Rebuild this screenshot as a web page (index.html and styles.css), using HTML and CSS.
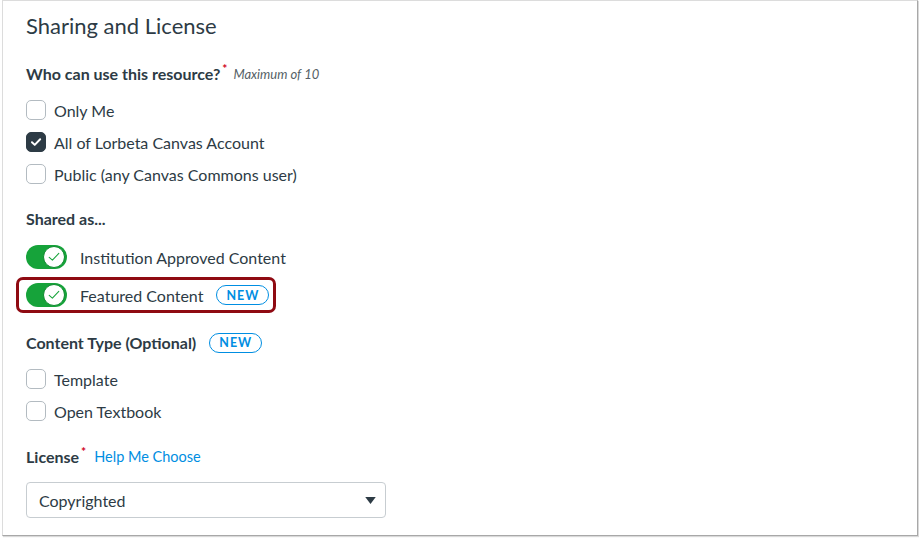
FILE: index.html
```html
<!DOCTYPE html>
<html lang="en">
<head>
<meta charset="utf-8">
<title>Sharing and License</title>
<link rel="stylesheet" href="styles.css">
</head>
<body>
<div class="frame">
  <h2 class="title">Sharing and License</h2>

  <div class="label label-who">Who can use this resource?<span class="req">*</span> <span class="hint">Maximum of 10</span></div>
  <div class="checks checks-who">
    <label class="check"><span class="box"></span>Only Me</label>
    <label class="check"><span class="box checked"><svg viewBox="0 0 20 20" width="20" height="20"><path d="M5.5 10.2 L8.6 13.2 L14.6 7" fill="none" stroke="#fff" stroke-width="2.2" stroke-linecap="round" stroke-linejoin="round"/></svg></span>All of Lorbeta Canvas Account</label>
    <label class="check"><span class="box"></span>Public (any Canvas Commons user)</label>
  </div>

  <div class="label label-shared">Shared as...</div>
  <div class="toggles">
    <div class="toggle-row"><span class="toggle"><span class="knob"><svg viewBox="0 0 20 20" width="16" height="16"><path d="M4 10.5 L8 14 L16 5.5" fill="none" stroke="#16a33a" stroke-width="1.3" stroke-linecap="round" stroke-linejoin="round"/></svg></span></span>Institution Approved Content</div>
    <div class="highlight">
      <div class="toggle-row"><span class="toggle"><span class="knob"><svg viewBox="0 0 20 20" width="16" height="16"><path d="M4 10.5 L8 14 L16 5.5" fill="none" stroke="#16a33a" stroke-width="1.3" stroke-linecap="round" stroke-linejoin="round"/></svg></span></span>Featured Content<span class="badge badge-featured">NEW</span></div>
    </div>
  </div>

  <div class="label label-type">Content Type (Optional)<span class="badge badge-type">NEW</span></div>
  <div class="checks checks-type">
    <label class="check"><span class="box"></span>Template</label>
    <label class="check"><span class="box"></span>Open Textbook</label>
  </div>

  <div class="label label-license">License<span class="req">*</span><a class="link" href="#">Help Me Choose</a></div>
  <div class="select">
    <span>Copyrighted</span>
    <svg class="arrow" viewBox="0 0 12 8" width="11" height="7"><path d="M0 0 H12 L6 8 Z" fill="#2d3b45"/></svg>
  </div>
</div>
</body>
</html>
```

FILE: styles.css
```css
* { box-sizing: border-box; }
html, body { margin: 0; padding: 0; background: #fff; }
body {
  font-family: Lato, "Open Sans", sans-serif;
  color: #2d3b45;
  width: 919px;
  height: 538px;
  overflow: hidden;
}
.frame {
  margin-left: 2px;
  width: 916px;
  height: 536px;
  border: 1px solid #dcdcdc;
  border-right: 1px solid #a8a8a8;
  border-bottom: 1px solid #a8a8a8;
  box-shadow: 1px 1px 1px rgba(0,0,0,0.15);
  padding: 11px 0 0 23px;
}
.title {
  margin: 0;
  font-size: 22px;
  font-weight: 400;
  line-height: 28px;
  height: 28px;
}
.label {
  font-weight: 700;
  font-size: 16px;
  line-height: 24px;
  height: 24px;
  display: flex;
  align-items: center;
}
.label-who { margin-top: 22px; }
.label-shared { margin-top: 17px; }
.label-type { margin-top: 18px; }
.label-license { margin-top: 18px; }
.req {
  color: #d0021b;
  font-size: 12px;
  align-self: flex-start;
  line-height: 14px;
  margin-left: 2px;
}
.hint {
  font-style: italic;
  font-weight: 400;
  font-size: 13px;
  color: #555f66;
  margin-left: 6px;
}
.checks-who { margin-top: 8px; }
.checks-type { margin-top: 8px; }
.check {
  display: flex;
  align-items: center;
  height: 32px;
  font-size: 16px;
}
.box {
  width: 20px;
  height: 20px;
  border: 1px solid #b3bbc1;
  border-radius: 5px;
  margin-right: 8px;
  background: #fff;
  display: flex;
  align-items: center;
  justify-content: center;
}
.box.checked {
  background: #2d3b45;
  border-color: #2d3b45;
}
.toggles { margin-top: 7px; }
.toggle-row {
  display: flex;
  align-items: center;
  height: 38px;
  font-size: 16px;
}
.toggle {
  width: 41px;
  height: 24px;
  border-radius: 12px;
  background: #16a33a;
  position: relative;
  margin-right: 13px;
  display: flex;
  align-items: center;
  justify-content: flex-end;
  padding-right: 2px;
}
.knob {
  width: 22px;
  height: 22px;
  border-radius: 50%;
  background: #fff;
  border: 1px solid #0e8a2e;
  display: flex;
  align-items: center;
  justify-content: center;
}
.highlight {
  margin-left: -10px;
  margin-top: 1px;
  width: 260px;
  height: 36px;
  border: 3px solid #8f0a12;
  border-radius: 7px;
  padding-left: 7px;
  display: flex;
  align-items: center;
}
.highlight .toggle-row { height: 30px; }
.badge {
  display: inline-flex;
  align-items: center;
  justify-content: center;
  height: 20px;
  padding: 0 9px;
  border: 1px solid #008ee2;
  border-radius: 10px;
  color: #008ee2;
  font-size: 12.5px;
  font-weight: 700;
  letter-spacing: 1px;
}
.badge-featured { margin-left: 13px; }
.badge-type { margin-left: 13px; }
.link {
  color: #008ee2;
  text-decoration: none;
  font-weight: 400;
  font-size: 14.5px;
  margin-left: 8px;
}
.select {
  margin-top: 13px;
  width: 360px;
  height: 36px;
  border: 1px solid #c7cdd1;
  border-radius: 4px;
  display: flex;
  align-items: center;
  justify-content: space-between;
  padding: 0 9px 0 12px;
  font-size: 16px;
}
```
